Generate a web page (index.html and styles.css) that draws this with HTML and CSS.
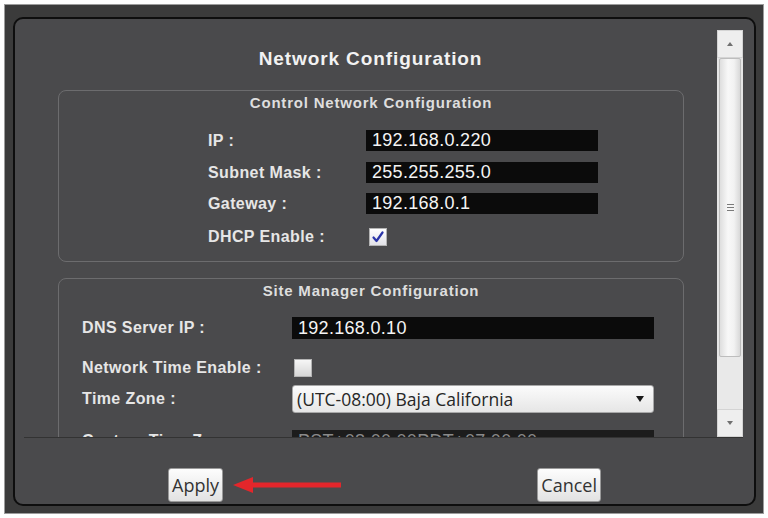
FILE: index.html
```html
<!DOCTYPE html>
<html lang="en">
<head>
    <meta charset="UTF-8">
    <meta name="viewport" content="width=device-width, initial-scale=1.0">
    <title>Network Configuration</title>
    <link rel="stylesheet" href="styles.css">
</head>
<body>
    <div class="frame">
        <div class="panel">
            <div class="scroll">
                <div class="content">
                    <h1 class="title">Network Configuration</h1>

                    <div class="group group-control">
                        <div class="group-title">Control Network Configuration</div>
                        <div class="row row-ip">
                            <span class="label">IP :</span>
                            <input class="text-input" type="text" value="192.168.0.220">
                        </div>
                        <div class="row row-subnet">
                            <span class="label">Subnet Mask :</span>
                            <input class="text-input" type="text" value="255.255.255.0">
                        </div>
                        <div class="row row-gateway">
                            <span class="label">Gateway :</span>
                            <input class="text-input" type="text" value="192.168.0.1">
                        </div>
                        <div class="row row-dhcp">
                            <span class="label">DHCP Enable :</span>
                            <span class="checkbox checked">
                                <svg width="12" height="12" viewBox="0 0 12 12">
                                    <path d="M1.5 6.5 L4.5 10 L10.5 1.5" fill="none" stroke="#2a34a8" stroke-width="2.2" stroke-linecap="round" stroke-linejoin="round"/>
                                </svg>
                            </span>
                        </div>
                    </div>

                    <div class="group group-site">
                        <div class="group-title">Site Manager Configuration</div>
                        <div class="row row-dns">
                            <span class="label">DNS Server IP :</span>
                            <input class="text-input wide" type="text" value="192.168.0.10">
                        </div>
                        <div class="row row-ntp">
                            <span class="label">Network Time Enable :</span>
                            <span class="checkbox"></span>
                        </div>
                        <div class="row row-tz">
                            <span class="label">Time Zone :</span>
                            <div class="select">
                                <span>(UTC-08:00) Baja California</span>
                                <span class="caret"></span>
                            </div>
                        </div>
                        <div class="row row-custom">
                            <span class="label">Custom Time Zone :</span>
                            <input class="text-input wide disabled" type="text" value="PST+08:00:00PDT+07:00:00">
                        </div>
                    </div>
                </div>

                <div class="scrollbar">
                    <div class="sb-btn"><span class="tri up"></span></div>
                    <div class="sb-thumb"><span class="grip"></span></div>
                    <div class="sb-track"></div>
                    <div class="sb-btn"><span class="tri down"></span></div>
                </div>
            </div>

            <div class="footer">
                <div class="apply-group">
                    <button class="btn">Apply</button>
                    <svg class="pointer" width="110" height="18" viewBox="0 0 110 18">
                        <rect x="16" y="6.5" width="92" height="5" fill="#e3262b"/>
                        <polygon points="0,9 20,1 20,17" fill="#e3262b"/>
                    </svg>
                </div>
                <button class="btn">Cancel</button>
            </div>
        </div>
    </div>
</body>
</html>
```

FILE: styles.css
```css
/* Dark network settings dialog */
body {
    margin: 0;
    background-color: #fff;
    font-family: "Liberation Sans", Arial, sans-serif;
}

.frame {
    margin: 4px 0 0 4px;
    width: 760px;
    height: 510px;
    box-sizing: border-box;
    border: 1px solid #9c9c9c;
    background-color: #3b3b3b;
    padding: 12px 7px 7px 8px;
}

.panel {
    display: flex;
    flex-direction: column;
    height: 100%;
    box-sizing: border-box;
    border: 2px solid #0e0e0e;
    border-radius: 10px;
    background-color: #4a4a4c;
    padding: 11px 11px 0 9px;
}

.scroll {
    display: flex;
    height: 407px;
    border-bottom: 1px solid #333;
    overflow: hidden;
}

.content {
    flex: 1;
    overflow: hidden;
}

.title {
    margin: 18px 0 0;
    font-size: 19px;
    line-height: 22px;
    letter-spacing: 0.9px;
    text-align: center;
    color: #f2f2f2;
}

.group {
    margin: 20px 33px 0 34px;
    border: 1px solid #6c6c6e;
    border-radius: 8px;
    padding: 3px 0 11px;
}

.group-site {
    margin-top: 16px;
}

.group-title {
    font-size: 15px;
    font-weight: bold;
    line-height: 18px;
    letter-spacing: 0.8px;
    text-align: center;
    color: #dedede;
}

.row {
    display: flex;
    align-items: center;
}

.label {
    font-size: 16px;
    font-weight: bold;
    letter-spacing: 0.4px;
    color: #e6e6e6;
}

.group-control .row {
    padding-left: 149px;
    height: 21px;
}

.group-control .label {
    width: 158px;
}

.row-ip { margin-top: 18px; }
.row-subnet { margin-top: 11px; }
.row-gateway { margin-top: 10px; }
.group-control .row-dhcp { margin-top: 10px; height: 26px; }

.group-site .row {
    padding-left: 23px;
}

.group-site .label {
    width: 210px;
}

.row-dns { margin-top: 17px; height: 22px; }
.row-ntp { margin-top: 18px; height: 21px; }
.row-tz { margin-top: 7px; height: 28px; }
.row-custom { margin-top: 17px; height: 22px; }

.text-input {
    width: 232px;
    height: 21px;
    box-sizing: border-box;
    margin: 0;
    border: none;
    padding: 0 0 0 6px;
    background-color: #0b0b0b;
    color: #f4f4f4;
    font-family: "Liberation Sans", Arial, sans-serif;
    font-size: 18px;
    line-height: 21px;
    letter-spacing: 0.3px;
}

.text-input.wide {
    width: 362px;
    height: 22px;
}

.text-input.disabled {
    background-color: #1c1c1c;
    color: #8a8a8a;
}

.checkbox {
    display: flex;
    align-items: center;
    justify-content: center;
    width: 16px;
    height: 16px;
    margin-left: 2px;
    border: 1px solid #b4b4b4;
    background: linear-gradient(#f6f6f6, #d6d6d6);
}

.checkbox.checked {
    margin-left: 3px;
    background: linear-gradient(#ffffff, #e2e2e8);
}

.select {
    display: flex;
    align-items: center;
    justify-content: space-between;
    width: 362px;
    height: 28px;
    box-sizing: border-box;
    padding: 0 9px 0 4px;
    border: 1px solid #a8a8a8;
    border-radius: 3px;
    background: linear-gradient(#fbfbfb, #e6e6e6);
    color: #262626;
    font-family: "Open Sans", sans-serif;
    font-size: 17.5px;
}

.caret {
    width: 0;
    height: 0;
    border-left: 4px solid transparent;
    border-right: 4px solid transparent;
    border-top: 6px solid #1a1a1a;
}

.scrollbar {
    display: flex;
    flex-direction: column;
    width: 26px;
    background-color: #e6e6e6;
}

.sb-btn {
    display: flex;
    align-items: center;
    justify-content: center;
    height: 28px;
    box-sizing: border-box;
    border: 1px solid #d4d4d4;
    background-color: #eeeeee;
}

.tri {
    width: 0;
    height: 0;
    border-left: 3px solid transparent;
    border-right: 3px solid transparent;
}

.tri.up {
    border-bottom: 4px solid #707070;
}

.tri.down {
    border-top: 4px solid #707070;
}

.sb-thumb {
    display: flex;
    align-items: center;
    justify-content: center;
    height: 299px;
    margin: 0 2px;
    box-sizing: border-box;
    border: 1px solid #bdbdbd;
    border-radius: 2px;
    background: linear-gradient(90deg, #dedede, #f8f8f8 40%, #f2f2f2 70%, #d8d8d8);
}

.grip {
    width: 7px;
    height: 7px;
    background: repeating-linear-gradient(#7a7a7a 0 1px, transparent 1px 3px);
}

.sb-track {
    flex: 1;
    background-color: #e9e9e9;
}

.footer {
    flex: 1;
    display: flex;
    justify-content: space-between;
    align-items: flex-start;
    padding: 30px 142px 0 144px;
}

.apply-group {
    display: flex;
    align-items: center;
}

.pointer {
    margin-left: 10px;
}

.btn {
    height: 34px;
    padding: 0 3px;
    border: 1px solid #9a9a9a;
    border-radius: 3px;
    background: linear-gradient(#fdfdfd, #e2e2e2);
    color: #333;
    font-family: "Open Sans", sans-serif;
    font-size: 18px;
}
```
